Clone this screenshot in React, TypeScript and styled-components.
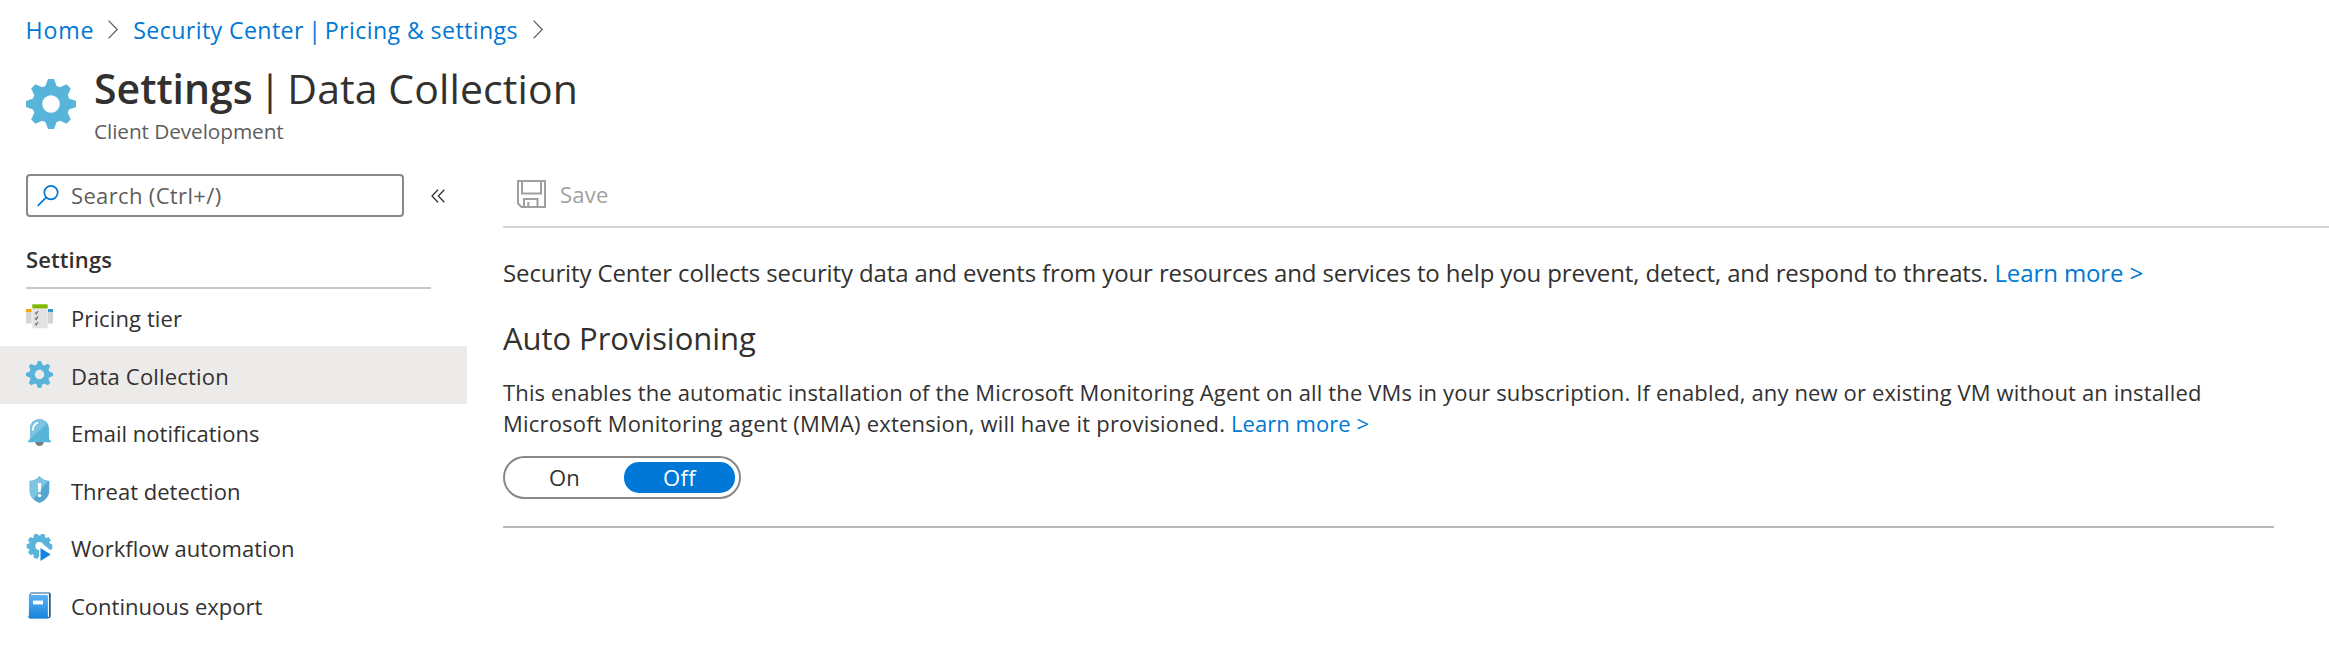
import React from "react";
import styled, { createGlobalStyle } from "styled-components";

const GlobalStyle = createGlobalStyle`
  * { box-sizing: border-box; }
  body {
    margin: 0;
    background: #fff;
    color: #323130;
    font-family: "Open Sans", "Noto Sans", sans-serif;
  }
  svg { display: block; flex: none; }
`;

const Page = styled.div`
  min-height: 667px;
  overflow: hidden;
`;

const Breadcrumb = styled.nav`
  display: flex;
  align-items: center;
  height: 60px;
  padding-left: 25.5px;
  font-size: 23.2px;
  line-height: 60px;
`;

const Crumb = styled.a<{ $tracking: number; $gap: number }>`
  color: #0078d4;
  white-space: pre;
  letter-spacing: ${(p) => p.$tracking}px;
  margin-right: ${(p) => p.$gap}px;
`;

const CrumbPipe = styled.span`
  margin: 0 -3px 0 -2px;
`;

const CrumbArrow = styled.svg<{ $gap?: number }>`
  width: 10px;
  height: 19px;
  margin: -1px ${(p) => p.$gap ?? 0}px 0 0;
`;

const Header = styled.header`
  display: flex;
  align-items: center;
  gap: 18px;
  height: 88px;
  padding-left: 26px;
`;

const HeaderText = styled.div`
  height: 88px;
`;

const Title = styled.h1`
  display: flex;
  margin: 0;
  font-size: 41px;
  font-weight: 400;
  line-height: 56px;
`;

const TitleStrong = styled.span`
  font-weight: 600;
`;

const TitlePipe = styled.span`
  margin: 0 6px;
`;

const TitleName = styled.span`
  letter-spacing: 0.1px;
`;

const Subtitle = styled.div`
  color: #605e5c;
  font-size: 20.8px;
  line-height: 30px;
  letter-spacing: -0.09px;
`;

const Body = styled.div`
  display: flex;
`;

const Sidebar = styled.aside`
  flex: none;
  width: 467px;
  margin-right: 36px;
  padding-top: 26px;
`;

const SearchRow = styled.div`
  display: flex;
  align-items: center;
  gap: 27px;
  padding-left: 26px;
`;

const SearchBox = styled.div`
  display: flex;
  align-items: center;
  gap: 12px;
  width: 378px;
  height: 43px;
  padding-left: 9px;
  border: 2px solid #8a8886;
  border-radius: 4px;
  color: #605e5c;
`;

const SearchText = styled.span`
  padding-bottom: 2px;
  font-size: 22px;
  line-height: 30px;
  letter-spacing: 0.35px;
`;

const GroupHeading = styled.h2`
  width: 405px;
  height: 58px;
  margin: 14px 0 0 26px;
  border-bottom: 2px solid #c8c8c8;
  font-size: 22px;
  font-weight: 600;
  line-height: 56px;
  letter-spacing: 0.1px;
`;

const Menu = styled.ul`
  margin: -0.7px 0 0;
  padding: 0;
  list-style: none;
`;

const MenuItem = styled.li<{ $selected?: boolean }>`
  display: flex;
  align-items: center;
  gap: 18px;
  height: 57.6px;
  padding-left: 26px;
  background: ${(p) => (p.$selected ? "#edebe9" : "transparent")};
`;

const MenuLabel = styled.span<{ $tracking: number }>`
  padding-top: 2px;
  font-size: 22px;
  line-height: 30px;
  letter-spacing: ${(p) => p.$tracking}px;
`;

const Main = styled.main`
  flex: 1;
  padding-top: 14px;
`;

const Toolbar = styled.div`
  display: flex;
  align-items: center;
  height: 66px;
  padding-left: 14px;
  border-bottom: 2px solid #d6d6d6;
`;

const SaveButton = styled.button`
  display: flex;
  align-items: center;
  gap: 14px;
  padding: 0;
  border: 0;
  background: none;
  color: #a19f9d;
  font: inherit;
  font-size: 22px;
  line-height: 28px;
  letter-spacing: 0.2px;
`;

const Intro = styled.p`
  margin: 27px 0 0;
  font-size: 24px;
  line-height: 36px;
  letter-spacing: -0.118px;
  white-space: nowrap;
`;

const SectionHeading = styled.h2`
  margin: 25px 0 0;
  font-size: 31px;
  font-weight: 400;
  line-height: 44px;
  letter-spacing: -0.05px;
`;

const Description = styled.p`
  margin: 17px 0 0;
  font-size: 22px;
  line-height: 31px;
  white-space: nowrap;
`;

const Line = styled.span<{ $tracking: number }>`
  display: block;
  letter-spacing: ${(p) => p.$tracking}px;
`;

const Link = styled.a<{ $tracking?: number }>`
  color: #0078d4;
  letter-spacing: ${(p) => p.$tracking ?? 0}px;
`;

const Toggle = styled.div`
  display: flex;
  justify-content: space-between;
  width: 238px;
  height: 43px;
  margin-top: 17px;
  padding: 4px;
  border: 2px solid #8a8886;
  border-radius: 22px;
`;

const ToggleOption = styled.button<{ $active?: boolean }>`
  width: 111px;
  height: 31px;
  padding: 0;
  border: 0;
  border-radius: 15px;
  background: ${(p) => (p.$active ? "#0078d7" : "transparent")};
  color: ${(p) => (p.$active ? "#fff" : "#323130")};
  font: inherit;
  font-size: 22px;
  line-height: 31px;
  letter-spacing: 0.3px;
`;

const Divider = styled.hr`
  width: 1771px;
  height: 2px;
  margin: 27px 0 0;
  border: 0;
  background: #b9b9b9;
`;

/* Outline of a toothed wheel centred on (c, c). */
function gearPath(c: number, teeth: number, outer: number, root: number, tip: number, base: number, turn: number) {
  let d = "";
  for (let i = 0; i < teeth; i++) {
    const a = ((i + turn) * 2 * Math.PI) / teeth;
    const at = (r: number, w: number) =>
      `${(c + r * Math.sin(a) + w * Math.cos(a)).toFixed(2)} ${(c - r * Math.cos(a) + w * Math.sin(a)).toFixed(2)}`;
    d += i === 0 ? `M${at(root, -base)}` : `A${root} ${root} 0 0 1 ${at(root, -base)}`;
    d += `L${at(outer, -tip)}L${at(outer, tip)}L${at(root, base)}`;
  }
  return d + "Z";
}

const GearIcon = ({ size }: { size: number }) => (
  <svg width={size} height={size} viewBox="0 0 50 50">
    <path
      fillRule="evenodd"
      fill="#59b4d9"
      d={gearPath(25, 8, 25, 18, 3, 5.6, 0) + "M16.2 25a8.8 8.8 0 1 0 17.6 0a8.8 8.8 0 1 0-17.6 0Z"}
    />
  </svg>
);

const PricingIcon = () => (
  <svg width="27" height="27" viewBox="0 0 27 27">
    <path fill="#d4d4d4" d="M0 7.5h5.6v12H0zM22 7.5h5v12h-5z" />
    <path fill="#ffa200" d="M0 5h5.6v3H0z" />
    <path fill="#3999c6" d="M22 5h5v3h-5z" />
    <path fill="#e3e3e3" d="M6.3 4h15.4v20.3H6.3z" />
    <path fill="#7fba00" d="M6.3.3h15.4v4H6.3z" />
    <path
      fill="none"
      stroke="#7a7a7a"
      strokeWidth="1.4"
      d="M9 8.6l1.2 1.3L12 7M9 14l1.2 1.3L12 12.4M9 19.6l1.2 1.3L12 18"
    />
  </svg>
);

const BellIcon = () => (
  <svg width="27" height="27" viewBox="0 0 27 27">
    <path fill="#7a7a7a" d="M9.2 22.8h8.6a4.3 4.2 0 0 1-8.6 0Z" />
    <path
      fill="#59b4d9"
      d="M13.5.3C7.5.3 4 4.6 4 10v8c0 2.4-.6 3.2-2 4v1.3h23V22c-1.4-.8-2-1.6-2-4v-8C23 4.6 19.5.3 13.5.3Z"
    />
    <path fill="#7cc4e1" d="M13.5.3C7.5.3 4 4.6 4 10v8c0 1.6-.3 2.5-.8 3.1L21 4.2C19.3 1.8 16.7.3 13.5.3Z" />
    <path fill="none" stroke="#fff" strokeWidth="1.9" strokeLinecap="round" d="M6.9 10.8C7 7.3 8.6 5 11.3 3.8" />
  </svg>
);

const ShieldIcon = () => (
  <svg width="27" height="27" viewBox="0 0 27 27">
    <path
      fill="#53a6cf"
      d="M13.5 0C11.5 2.8 8 4.7 3.7 5v9.5c0 6 4.3 10.3 9.8 12.5 5.5-2.2 9.8-6.5 9.8-12.5V5C19 4.7 15.5 2.8 13.5 0Z"
    />
    <path fill="#7cc4e1" d="M13.5 0C11.5 2.8 8 4.7 3.7 5v9.5c0 3.4 1.3 6.2 3.5 8.5L22 5C18.3 4.5 15.3 2.6 13.5 0Z" />
    <path fill="#fff" d="M11.7 7h3.6l-.7 9.2h-2.2z" />
    <circle cx="13.5" cy="19.5" r="1.8" fill="#fff" />
  </svg>
);

const WorkflowIcon = () => (
  <svg width="27" height="27" viewBox="0 0 27 27">
    <g transform="translate(.6 -.6)">
      <path fill="#59b4d9" d={gearPath(12.8, 10, 12.7, 10.3, 2, 2.6, 0.5)} />
    </g>
    <circle cx="13.3" cy="12" r="4" fill="#fff" />
    <path fill="#fff" d="M13 11l3.5-1.5L27 15.5V27H13.3z" />
    <path fill="#59b4d9" d="M17 10.300l9.200.9v3.900l-1.900.8z" />
    <path fill="#1283de" d="M14.5 14v13l10.200-6.500z" />
  </svg>
);

const BookIcon = () => (
  <svg width="27" height="27" viewBox="0 0 27 27">
    <defs>
      <linearGradient id="cover" x1="0" y1="0" x2="0" y2="1">
        <stop offset="0" stopColor="#5cb1f5" />
        <stop offset="1" stopColor="#1784d9" />
      </linearGradient>
    </defs>
    <path fill="#175d96" d="M5 .5h18.200a1.500 1.500 0 0 1 1.500 1.500v22a2.300 2.300 0 0 1-2.300 2.300H4L3 3Z" />
    <path fill="#fff" d="M5.200 1.600H23v22.500a1.200 1.200 0 0 1-1.200 1.200L4.200 3Z" />
    <path fill="url(#cover)" d="M2.900 2.900h17.800a1.200 1.200 0 0 1 1.200 1.200v22.400H4a1.800 1.800 0 0 1-1.800-1.800l.7-1.500Z" />
    <path fill="#fff" d="M7 8.600h10v3.800H7z" />
  </svg>
);

const SearchIcon = () => (
  <svg width="22" height="22" viewBox="0 0 22 22" fill="none" stroke="#0078d4" strokeWidth="1.7">
    <circle cx="14" cy="7.6" r="6.7" />
    <path d="M9.2 12.4L.7 20.9" />
  </svg>
);

const CollapseIcon = () => (
  <svg width="14" height="14" viewBox="0 0 14 14" fill="none" stroke="#323130" strokeWidth="1.3">
    <path d="M7 .7L1 7l6 6.300M13.300.7L7.300 7l6 6.300" />
  </svg>
);

const SaveIcon = () => (
  <svg width="29" height="28" viewBox="0 0 29 28" fill="none" stroke="#a19f9d" strokeWidth="2">
    <path d="M1 1h27v26H4.500L1 23.500zM5 1v12.500h19V1M7 27v-8h13.500v8M11.300 22v5" />
  </svg>
);

const items = [
  { label: "Pricing tier", icon: <PricingIcon />, tracking: 0.11 },
  { label: "Data Collection", icon: <GearIcon size={27} />, tracking: 0.18, selected: true },
  { label: "Email notifications", icon: <BellIcon />, tracking: 0.02 },
  { label: "Threat detection", icon: <ShieldIcon />, tracking: 0 },
  { label: "Workflow automation", icon: <WorkflowIcon />, tracking: 0.05 },
  { label: "Continuous export", icon: <BookIcon />, tracking: 0 },
];

const Arrow = ({ gap }: { gap?: number }) => (
  <CrumbArrow $gap={gap} viewBox="0 0 10 19" fill="none" stroke="#605e5c" strokeWidth="1.3">
    <path d="M.6.600L9.200 9.500.6 18.400" />
  </CrumbArrow>
);

export default function App() {
  return (
    <Page>
      <GlobalStyle />
      <Breadcrumb>
        <Crumb $tracking={0.8} $gap={14}>Home</Crumb>
        <Arrow gap={15} />
        <Crumb $tracking={0.38} $gap={15}>
          Security Center <CrumbPipe>|</CrumbPipe> Pricing &amp; settings
        </Crumb>
        <Arrow />
      </Breadcrumb>
      <Header>
        <GearIcon size={50} />
        <HeaderText>
          <Title>
            <TitleStrong>Settings</TitleStrong>
            <TitlePipe>|</TitlePipe>
            <TitleName>Data Collection</TitleName>
          </Title>
          <Subtitle>Client Development</Subtitle>
        </HeaderText>
      </Header>
      <Body>
        <Sidebar>
          <SearchRow>
            <SearchBox>
              <SearchIcon />
              <SearchText>Search (Ctrl+/)</SearchText>
            </SearchBox>
            <CollapseIcon />
          </SearchRow>
          <GroupHeading>Settings</GroupHeading>
          <Menu>
            {items.map((item) => (
              <MenuItem key={item.label} $selected={item.selected}>
                {item.icon}
                <MenuLabel $tracking={item.tracking}>{item.label}</MenuLabel>
              </MenuItem>
            ))}
          </Menu>
        </Sidebar>
        <Main>
          <Toolbar>
            <SaveButton>
              <SaveIcon />
              Save
            </SaveButton>
          </Toolbar>
          <Intro>
            Security Center collects security data and events from your resources and services to help you prevent,
            detect, and respond to threats. <Link $tracking={-0.1}>Learn more &gt;</Link>
          </Intro>
          <SectionHeading>Auto Provisioning</SectionHeading>
          <Description>
            <Line $tracking={0.136}>
              This enables the automatic installation of the Microsoft Monitoring Agent on all the VMs in your
              subscription. If enabled, any new or existing VM without an installed
            </Line>
            <Line $tracking={0.19}>
              Microsoft Monitoring agent (MMA) extension, will have it provisioned.{" "}
              <Link $tracking={0.05}>Learn more &gt;</Link>
            </Line>
          </Description>
          <Toggle>
            <ToggleOption>On</ToggleOption>
            <ToggleOption $active>Off</ToggleOption>
          </Toggle>
          <Divider />
        </Main>
      </Body>
    </Page>
  );
}
